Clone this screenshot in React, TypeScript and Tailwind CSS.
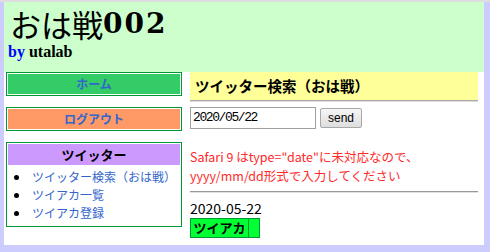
export default function App() {
  const jp = { fontFamily: '"Noto Sans CJK JP", "Noto Sans", sans-serif' };
  return (
    <div className="w-[490px] h-[252px] bg-[#ccccff] overflow-hidden" style={jp}>
      <div className="h-[2px] bg-[#dddddd]" />
      <div className="ml-[4px] w-[480px] bg-white h-[243px]">
        {/* header */}
        <div className="h-[70px] bg-[#ccffcc] pt-[6px]">
          <div className="pl-[6px] h-[31px] flex items-center leading-none text-black">
            <span className="text-[31px]" style={{ fontFamily: '"Noto Sans CJK JP", serif' }}>おは戦</span>
            <span className="text-[28px] font-bold tracking-[2px]" style={{ fontFamily: '"DejaVu Serif", serif' }}>002</span>
          </div>
          <div
            className="pl-[4px] mt-[4px] text-[16px] leading-[17px] font-bold"
            style={{ fontFamily: '"Liberation Serif", serif' }}
          >
            <span className="text-[#0000ff]">by</span> <span className="text-black">utalab</span>
          </div>
        </div>

        <div className="flex">
          {/* sidebar */}
          <div className="w-[176px] ml-[2px] flex flex-col gap-[11px]">
            <div className="border border-[#009933] p-[1px] bg-white">
              <div className="h-[20px] bg-[#33cc66] flex items-center justify-center text-[12px] font-bold text-[#3366cc]">
                ホーム
              </div>
            </div>
            <div className="border border-[#009933] p-[1px] bg-white">
              <div className="h-[20px] bg-[#ff9966] flex items-center justify-center text-[12px] font-bold text-[#3366cc]">
                ログアウト
              </div>
            </div>
            <div className="border border-[#009933] p-[1px] bg-white h-[85px]">
              <div className="h-[21px] bg-[#cc99ff] flex items-center justify-center text-[13px] font-bold text-black">
                ツイッター
              </div>
              <ul className="pt-[3px] text-[12px] leading-[18px] text-[#3366cc]">
                {["ツイッター検索（おは戦）", "ツイアカ一覧", "ツイアカ登録"].map((t) => (
                  <li key={t} className="flex items-center">
                    <span className="ml-[6px] w-[5px] h-[5px] rounded-full bg-black" />
                    <span className="ml-[13px]">{t}</span>
                  </li>
                ))}
              </ul>
            </div>
          </div>

          {/* main */}
          <div className="ml-[8px] w-[288px]">
            <div className="h-[28px] bg-[#ffff99] flex items-center pl-[5px] text-[14.5px] font-bold text-black">
              ツイッター検索（おは戦）
            </div>
            <div className="h-[1px] bg-[#aaaaaa]" />
            <div className="h-[1px] bg-[#dddddd]" />
            <div className="mt-[5px] flex items-center gap-[4px]">
              <div
                className="w-[126px] h-[22px] border border-[#a0a0a0] flex items-center pl-[2px] text-[13px] tracking-[-1.4px] text-black"
                style={{ fontFamily: '"Liberation Mono", monospace' }}
              >
                2020/05/22
              </div>
              <button
                className="w-[42px] h-[20px] border border-[#a8a8a8] rounded-[2px] bg-gradient-to-b from-[#f6f6f6] to-[#dedede] text-[12px] text-black flex items-center justify-center"
                style={{ fontFamily: '"Liberation Sans", sans-serif' }}
              >
                send
              </button>
            </div>
            <div className="mt-[18px] text-[12.5px] leading-[19px] text-[#ff2a2a]">
              <div>Safari 9 はtype="date"に未対応なので、</div>
              <div>yyyy/mm/dd形式で入力してください</div>
            </div>
            <div className="mt-[6px] h-[1px] bg-[#999999]" />
            <div className="h-[1px] bg-[#e0e0e0]" />
            <div className="mt-[7px] text-[14px] leading-[17px] text-black">2020-05-22</div>
            <div className="mt-[1px] flex w-[70px] h-[20px] border border-[#009933] bg-[#00ff33]">
              <div className="w-[58px] border-r border-[#009933] flex items-center justify-center text-[13px] font-bold text-black">
                ツイアカ
              </div>
              <div className="flex-1" />
            </div>
          </div>
        </div>
      </div>
    </div>
  );
}
